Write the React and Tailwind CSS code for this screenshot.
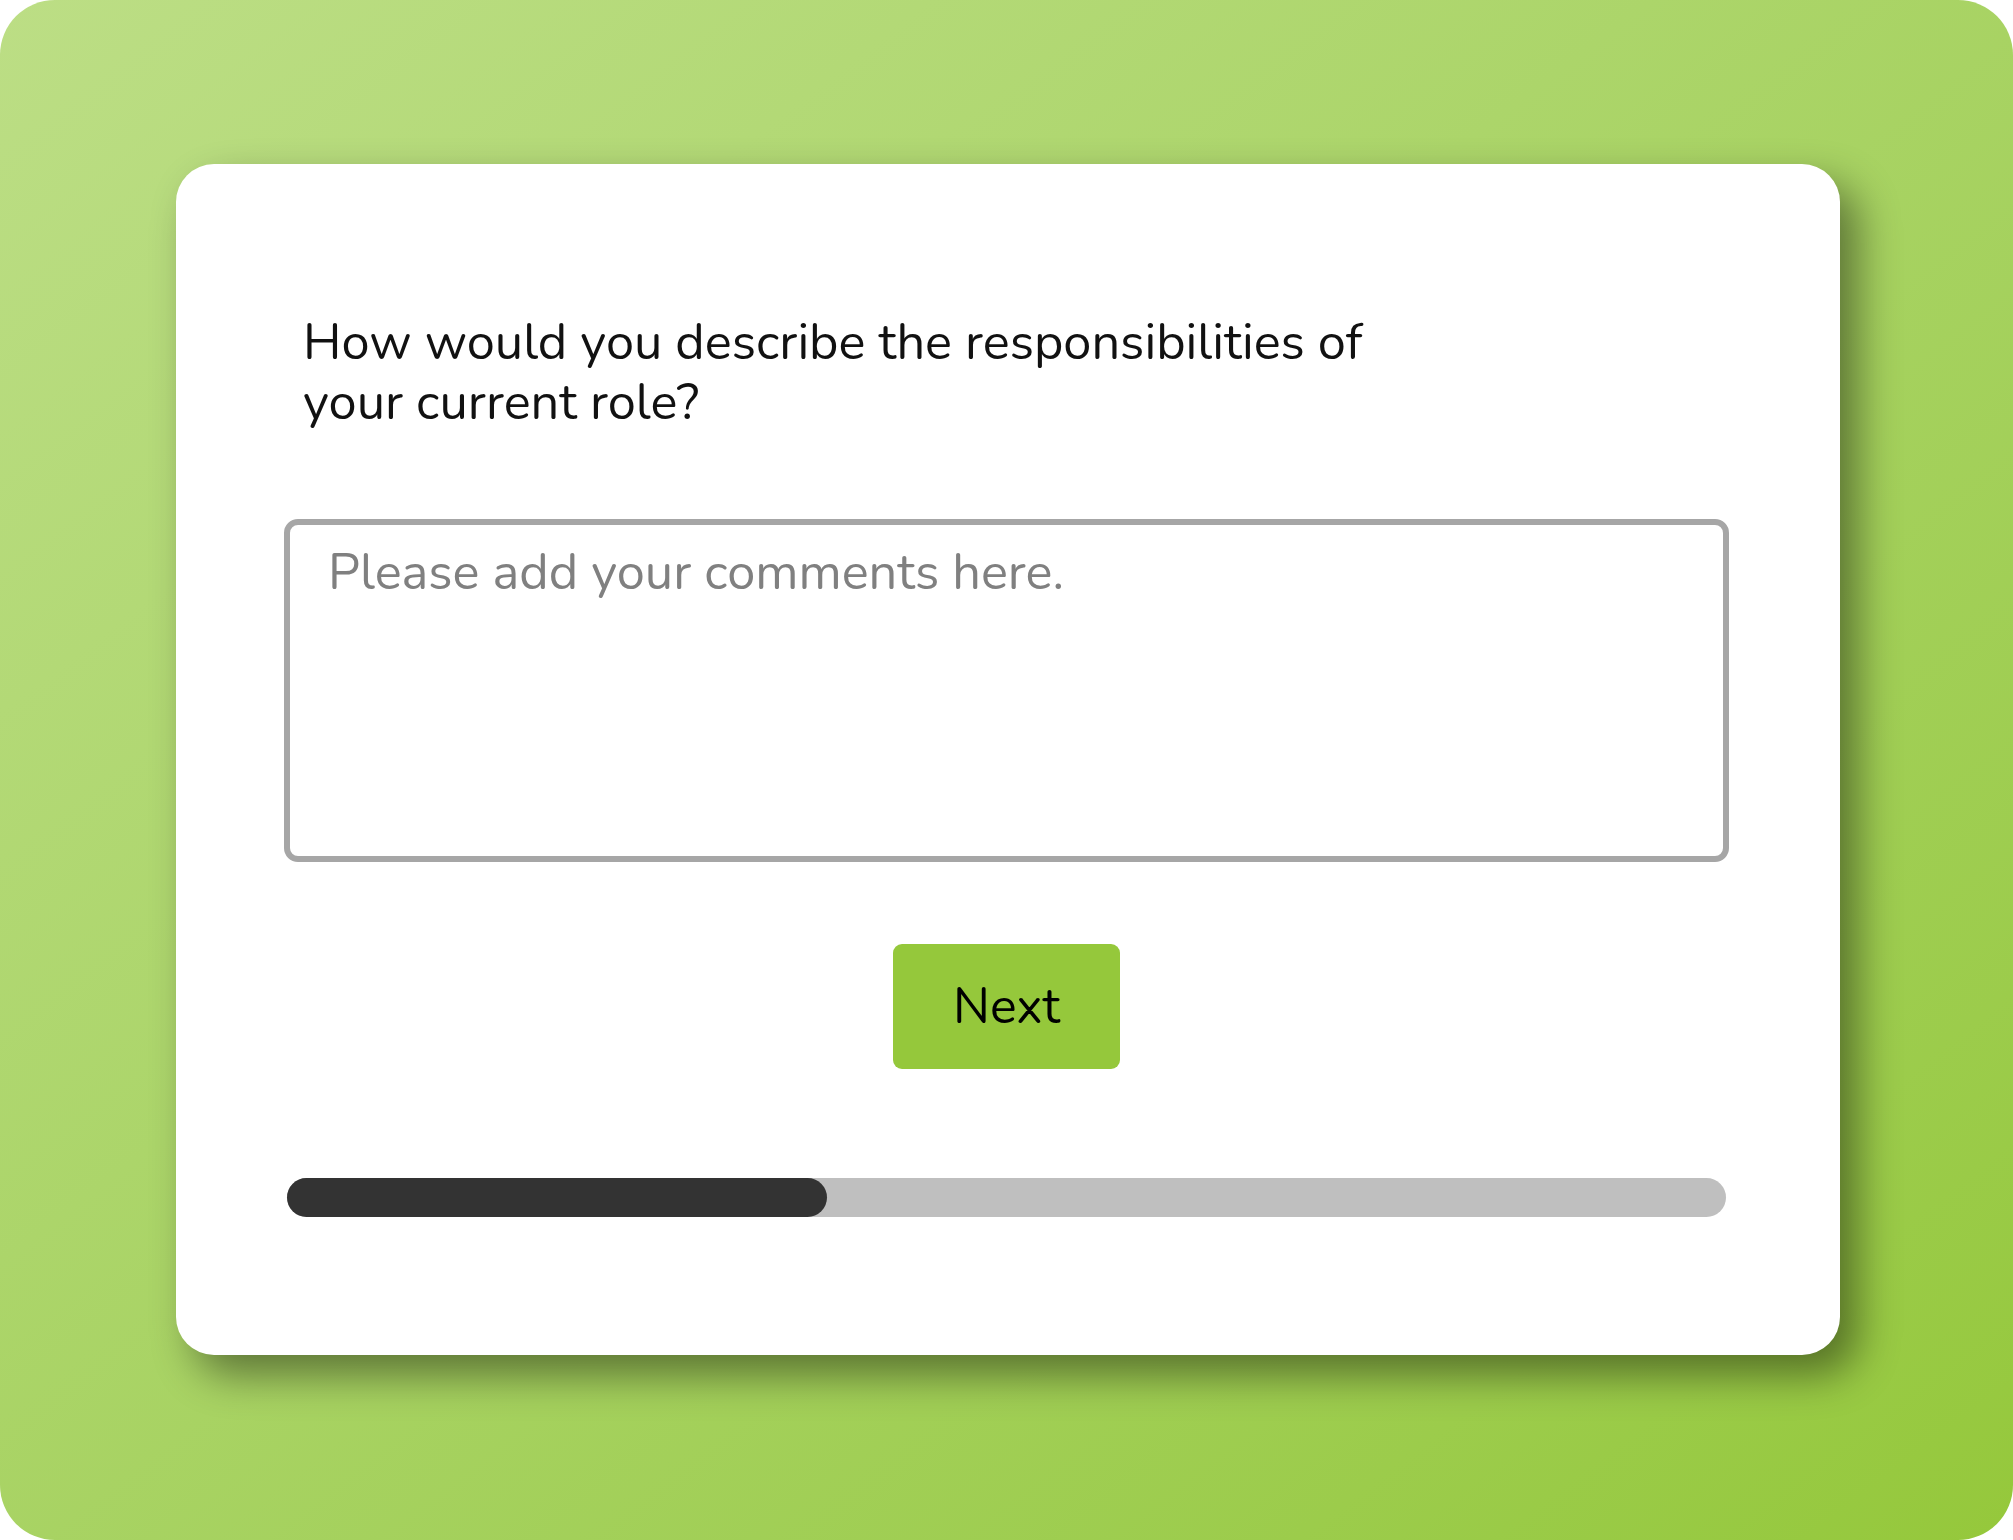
import React, { useState } from 'react';

const FONT = "font-['Nunito','Lato','Noto_Sans',sans-serif]";

function ProgressBar({ value }) {
  return (
    <div className="mx-[3px] h-[39px] rounded-full bg-[#bfbfbf]">
      <div className="h-full rounded-full bg-[#333333]" style={{ width: `${value}%` }} />
    </div>
  );
}

export default function App() {
  const [comment, setComment] = useState('');

  return (
    <div className="w-[2013px] h-[1540px] bg-white">
      <div className="h-full w-full overflow-hidden rounded-[55px] bg-gradient-to-br from-[#bcde85] to-[#95c83b] pl-[176px] pt-[164px]">
        <div
          className={`w-[1664px] h-[1191px] rounded-[38px] bg-white pl-[108px] pr-[111px] pt-[149px] shadow-[18px_20px_42px_rgba(0,0,0,0.44)] ${FONT}`}
        >
          <p className="whitespace-nowrap pl-[19px] text-[50.5px] leading-[60px] text-[#111111]">
            How would you describe the responsibilities of
            <br />
            your current role?
          </p>

          <textarea
            value={comment}
            onChange={(e) => setComment(e.target.value)}
            placeholder="Please add your comments here."
            className="mt-[86px] block h-[343px] w-full resize-none rounded-[14px] border-[6px] border-[#a6a6a6] px-[38px] pt-[18px] text-[50.5px] leading-[60px] text-[#333333] placeholder:text-[#808080] focus:outline-none"
          />

          <div className="mt-[82px] flex justify-center">
            <button className="h-[125px] w-[227px] rounded-[9px] bg-[#95c83b] text-[50px] text-black">
              Next
            </button>
          </div>

          <div className="mt-[109px]">
            <ProgressBar value={37.5} />
          </div>
        </div>
      </div>
    </div>
  );
}
